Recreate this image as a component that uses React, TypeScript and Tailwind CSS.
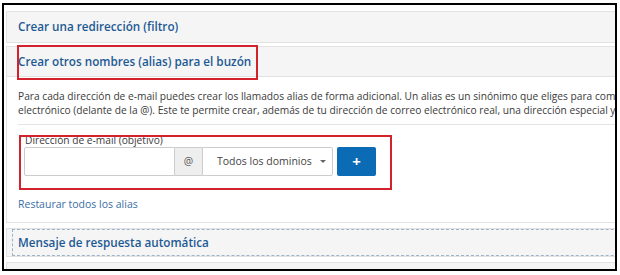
import React from 'react';

const titleCls = "text-[11.7px] font-semibold text-[#1d5a94] leading-none whitespace-nowrap";

function PanelHeader({ title, className = '' }: { title?: string; className?: string }) {
  return (
    <div className={`flex items-center bg-[#f5f5f5] pl-[11px] ${className}`}>
      {title && <span className={titleCls}>{title}</span>}
    </div>
  );
}

export default function App() {
  return (
    <div className="relative h-[275px] w-[620px] overflow-hidden bg-white font-['Open_Sans',sans-serif] text-[#3a3a3a]">
      {/* screenshot frame */}
      <div className="ml-[2px] mt-[3px] h-[268px] w-[615px] overflow-hidden border-2 border-black">
        <div className="flex w-[900px] flex-col pl-[2px] pt-[6px]">
          <div className="border border-[#e2e2e2]">
            <PanelHeader title="Crear una redirección (filtro)" className="h-[30px]" />
          </div>

          <div className="mt-[3px] border border-[#e2e2e2]">
            <PanelHeader title="Crear otros nombres (alias) para el buzón" className="h-[30px] border-b border-[#e2e2e2]" />
            <div className="h-[145px] bg-white pl-[11px] pt-[12px]">
              <p className="whitespace-nowrap text-[10.2px] leading-[14px]">
                Para cada dirección de e-mail puedes crear los llamados alias de forma adicional. Un alias es un sinónimo que eliges para complementar tu dirección de correo
                <br />
                electrónico (delante de la @). Este te permite crear, además de tu dirección de correo electrónico real, una dirección especial y adicional para ti.
              </p>
              <div className="mt-[7px] h-px w-full bg-[#e4e4e4]" />
              <div className="pl-[6px] pt-[8px]">
                <div className="whitespace-nowrap pl-px text-[10.2px] leading-[14px]">Dirección de e-mail (objetivo)</div>
                <div className="flex h-[29px] items-stretch">
                  <div className="w-[151px] rounded-l-[2px] border border-[#cccccc] bg-white" />
                  <div className="flex w-[27px] items-center justify-center border-y border-[#cccccc] bg-[#eeeeee] text-[10.5px] text-[#555]">@</div>
                  <div className="flex w-[131px] items-center rounded-r-[2px] border border-[#cccccc] bg-white pl-[14px] text-[10.5px] text-[#444]">
                    <span className="whitespace-nowrap">Todos los dominios</span>
                    <span className="ml-[8px] h-0 w-0 border-x-[3px] border-t-[3px] border-x-transparent border-t-[#666]" />
                  </div>
                  <div className="ml-[4px] flex w-[39px] items-center justify-center rounded-[2px] bg-[#0b6bb4] text-[15px] font-bold leading-none text-white">+</div>
                </div>
                <div className="h-[21px]" />
              </div>
              <div className="whitespace-nowrap text-[10.5px] leading-[14px] text-[#3a6ea5]">Restaurar todos los alias</div>
            </div>
          </div>

          <div className="mt-[5px] border border-[#e2e2e2] bg-[#f5f5f5]">
            <div className="ml-[5px] flex h-[27px] items-center border border-dashed border-[#9fb3c8] pl-[5px]">
              <span className={titleCls}>Mensaje de respuesta automática</span>
            </div>
          </div>

          <div className="mt-[5px] border border-[#e2e2e2]">
            <PanelHeader className="h-[30px]" />
          </div>
        </div>
      </div>

      {/* text below the frame */}
      <div className="pl-[17px] pt-[1px]">
        <span className={titleCls}>Crear una copia de seguridad</span>
      </div>

      {/* annotations */}
      <div className="absolute left-[17px] top-[45px] h-[35px] w-[241px] border-2 border-[#d3222c]" />
      <div className="absolute left-[19px] top-[135px] h-[55px] w-[373px] border-2 border-[#d3222c]" />
    </div>
  );
}
